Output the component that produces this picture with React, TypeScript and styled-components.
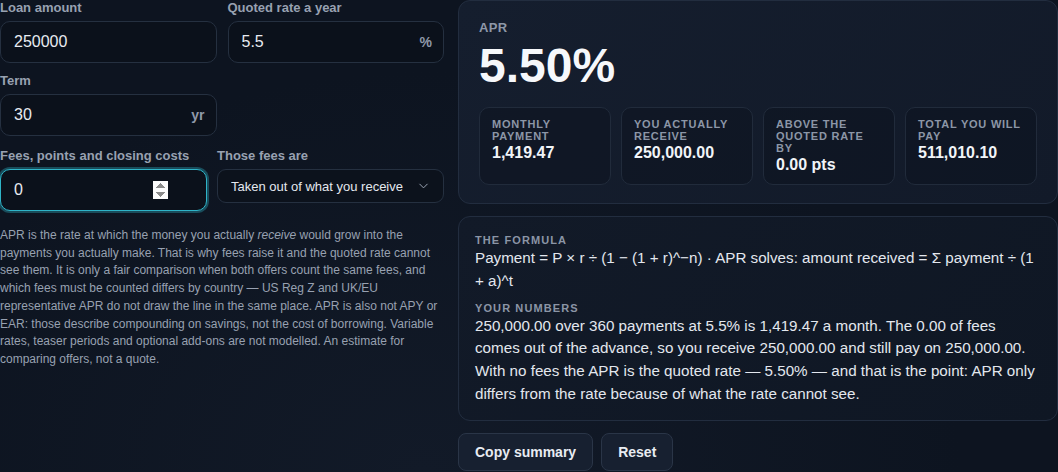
import React from "react";
import styled, { createGlobalStyle } from "styled-components";
import { ChevronDown } from "lucide-react";

const GlobalStyle = createGlobalStyle`
  html, body {
    margin: 0;
    padding: 0;
    background: #0e1521;
    color: #e4e8ef;
    font-family: "Liberation Sans", Arial, sans-serif;
  }
  * { box-sizing: border-box; }
`;

const Page = styled.div`
  display: grid;
  grid-template-columns: 444px 1fr;
  column-gap: 14px;
  align-items: start;
  min-height: 472px;
  background: radial-gradient(ellipse at 40% 100%, #121a28 0%, #0d1420 60%);
`;

const LeftCol = styled.div`
  display: flex;
  flex-direction: column;
`;

const FieldGrid = styled.div`
  display: grid;
  grid-template-columns: 1fr 1fr;
  column-gap: 11px;
  row-gap: 10px;
`;

const FeesRow = styled.div`
  display: grid;
  grid-template-columns: 207px 1fr;
  column-gap: 10px;
  align-items: start;
  margin-top: 12px;
`;

const Field = styled.label`
  display: flex;
  flex-direction: column;
  gap: 5px;
`;

const Label = styled.span`
  font-size: 13px;
  font-weight: 700;
  line-height: 16px;
  color: #98a1b1;
`;

const InputWrap = styled.div`
  position: relative;
`;

const Input = styled.input`
  width: 100%;
  height: 42px;
  padding: 0 38px 0 13px;
  background: #0b111b;
  border: 1px solid #253040;
  border-radius: 10px;
  color: #e8ebf1;
  font-family: "Liberation Sans", Arial, sans-serif;
  font-size: 16px;
  outline: none;
  &:focus {
    border-color: #2fb4c8;
    box-shadow: 0 0 0 2px rgba(47, 180, 200, 0.35);
  }
`;

const Suffix = styled.span`
  position: absolute;
  right: 12px;
  top: 50%;
  transform: translateY(-50%);
  font-size: 14px;
  font-weight: 700;
  color: #8f99aa;
  pointer-events: none;
`;

const Select = styled.select`
  width: 100%;
  height: 34px;
  padding: 0 32px 0 13px;
  appearance: none;
  background: #0c121c;
  border: 1px solid #253040;
  border-radius: 9px;
  color: #e4e8ef;
  font-family: "Liberation Sans", Arial, sans-serif;
  font-size: 13px;
  outline: none;
`;

const Chevron = styled.span`
  position: absolute;
  right: 13px;
  top: 50%;
  transform: translateY(-50%);
  display: flex;
  color: #9aa3b3;
  pointer-events: none;
`;

const Note = styled.p`
  margin: 16px 0 0;
  font-size: 12px;
  line-height: 17.7px;
  color: #98a1b1;
  em { font-style: italic; }
`;

const RightCol = styled.div`
  display: flex;
  flex-direction: column;
  gap: 12px;
`;

const Panel = styled.section`
  border: 1px solid #222d3f;
  border-radius: 12px;
  background: linear-gradient(135deg, #151e2e 0%, #121a29 100%);
`;

const HeroPanel = styled(Panel)`
  padding: 19px 20px 18px;
`;

const HeroLabel = styled.div`
  font-size: 13px;
  font-weight: 700;
  line-height: 16px;
  letter-spacing: 0.03em;
  text-transform: uppercase;
  color: #8e98a9;
`;

const HeroValue = styled.div`
  margin-top: 2px;
  font-size: 48px;
  font-weight: 700;
  line-height: 56px;
  color: #f6f8fb;
`;

const StatGrid = styled.div`
  display: grid;
  grid-template-columns: repeat(4, 1fr);
  gap: 10px;
  margin-top: 13px;
`;

const StatCard = styled.div`
  padding: 10px 12px;
  border: 1px solid #212b3b;
  border-radius: 10px;
  background: rgba(12, 18, 29, 0.45);
`;

const StatLabel = styled.div`
  font-size: 11px;
  font-weight: 700;
  line-height: 12px;
  letter-spacing: 0.07em;
  text-transform: uppercase;
  color: #8c96a7;
`;

const StatValue = styled.div`
  margin-top: 1px;
  font-size: 16px;
  font-weight: 700;
  line-height: 19px;
  color: #f1f4f8;
`;

const FormulaPanel = styled(Panel)`
  padding: 17px 16px 14px;
  background: linear-gradient(135deg, #121a28 0%, #0f1724 100%);
`;

const SectionLabel = styled.div<{ $spaced?: boolean }>`
  margin-top: ${(p) => (p.$spaced ? "9px" : "0")};
  font-size: 11px;
  font-weight: 700;
  line-height: 13px;
  letter-spacing: 0.1em;
  text-transform: uppercase;
  color: #8b95a6;
`;

const Body = styled.p`
  margin: 0;
  font-size: 15.2px;
  line-height: 22.8px;
  color: #e3e7ee;
`;

const ButtonRow = styled.div`
  display: flex;
  gap: 8px;
`;

const Button = styled.button`
  height: 38px;
  padding: 0 16px;
  background: #172030;
  border: 1px solid #2a3547;
  border-radius: 8px;
  color: #e8ecf2;
  font-family: "Liberation Sans", Arial, sans-serif;
  font-size: 14px;
  font-weight: 700;
  cursor: pointer;
`;

const stats = [
  { label: "Monthly payment", value: "1,419.47" },
  { label: "You actually receive", value: "250,000.00" },
  { label: "Above the quoted rate by", value: "0.00 pts" },
  { label: "Total you will pay", value: "511,010.10" },
];

export default function App() {
  return (
    <>
      <GlobalStyle />
      <Page>
        <LeftCol>
          <FieldGrid>
            <Field>
              <Label>Loan amount</Label>
              <InputWrap>
                <Input type="text" defaultValue="250000" />
              </InputWrap>
            </Field>
            <Field>
              <Label>Quoted rate a year</Label>
              <InputWrap>
                <Input type="text" defaultValue="5.5" />
                <Suffix>%</Suffix>
              </InputWrap>
            </Field>
            <Field>
              <Label>Term</Label>
              <InputWrap>
                <Input type="text" defaultValue="30" />
                <Suffix>yr</Suffix>
              </InputWrap>
            </Field>
          </FieldGrid>
          <FeesRow>
            <Field>
              <Label>Fees, points and closing costs</Label>
              <InputWrap>
                <Input type="number" defaultValue="0" autoFocus />
              </InputWrap>
            </Field>
            <Field>
              <Label>Those fees are</Label>
              <InputWrap>
                <Select defaultValue="out">
                  <option value="out">Taken out of what you receive</option>
                  <option value="paid">Paid up front</option>
                </Select>
                <Chevron>
                  <ChevronDown size={15} strokeWidth={1.6} />
                </Chevron>
              </InputWrap>
            </Field>
          </FeesRow>
          <Note>
            APR is the rate at which the money you actually <em>receive</em> would grow into the
            payments you actually make. That is why fees raise it and the quoted rate cannot see
            them. It is only a fair comparison when both offers count the same fees, and which fees
            must be counted differs by country — US Reg Z and UK/EU representative APR do not draw
            the line in the same place. APR is also not APY or EAR: those describe compounding on
            savings, not the cost of borrowing. Variable rates, teaser periods and optional add-ons
            are not modelled. An estimate for comparing offers, not a quote.
          </Note>
        </LeftCol>
        <RightCol>
          <HeroPanel>
            <HeroLabel>APR</HeroLabel>
            <HeroValue>5.50%</HeroValue>
            <StatGrid>
              {stats.map((s) => (
                <StatCard key={s.label}>
                  <StatLabel>{s.label}</StatLabel>
                  <StatValue>{s.value}</StatValue>
                </StatCard>
              ))}
            </StatGrid>
          </HeroPanel>
          <FormulaPanel>
            <SectionLabel>The formula</SectionLabel>
            <Body>
              Payment = P × r ÷ (1 − (1 + r)^−n) · APR solves: amount received = Σ payment ÷ (1 + a)^t
            </Body>
            <SectionLabel $spaced>Your numbers</SectionLabel>
            <Body>
              250,000.00 over 360 payments at 5.5% is 1,419.47 a month. The 0.00 of fees comes out
              of the advance, so you receive 250,000.00 and still pay on 250,000.00. With no fees
              the APR is the quoted rate — 5.50% — and that is the point: APR only differs from the
              rate because of what the rate cannot see.
            </Body>
          </FormulaPanel>
          <ButtonRow>
            <Button>Copy summary</Button>
            <Button>Reset</Button>
          </ButtonRow>
        </RightCol>
      </Page>
    </>
  );
}
